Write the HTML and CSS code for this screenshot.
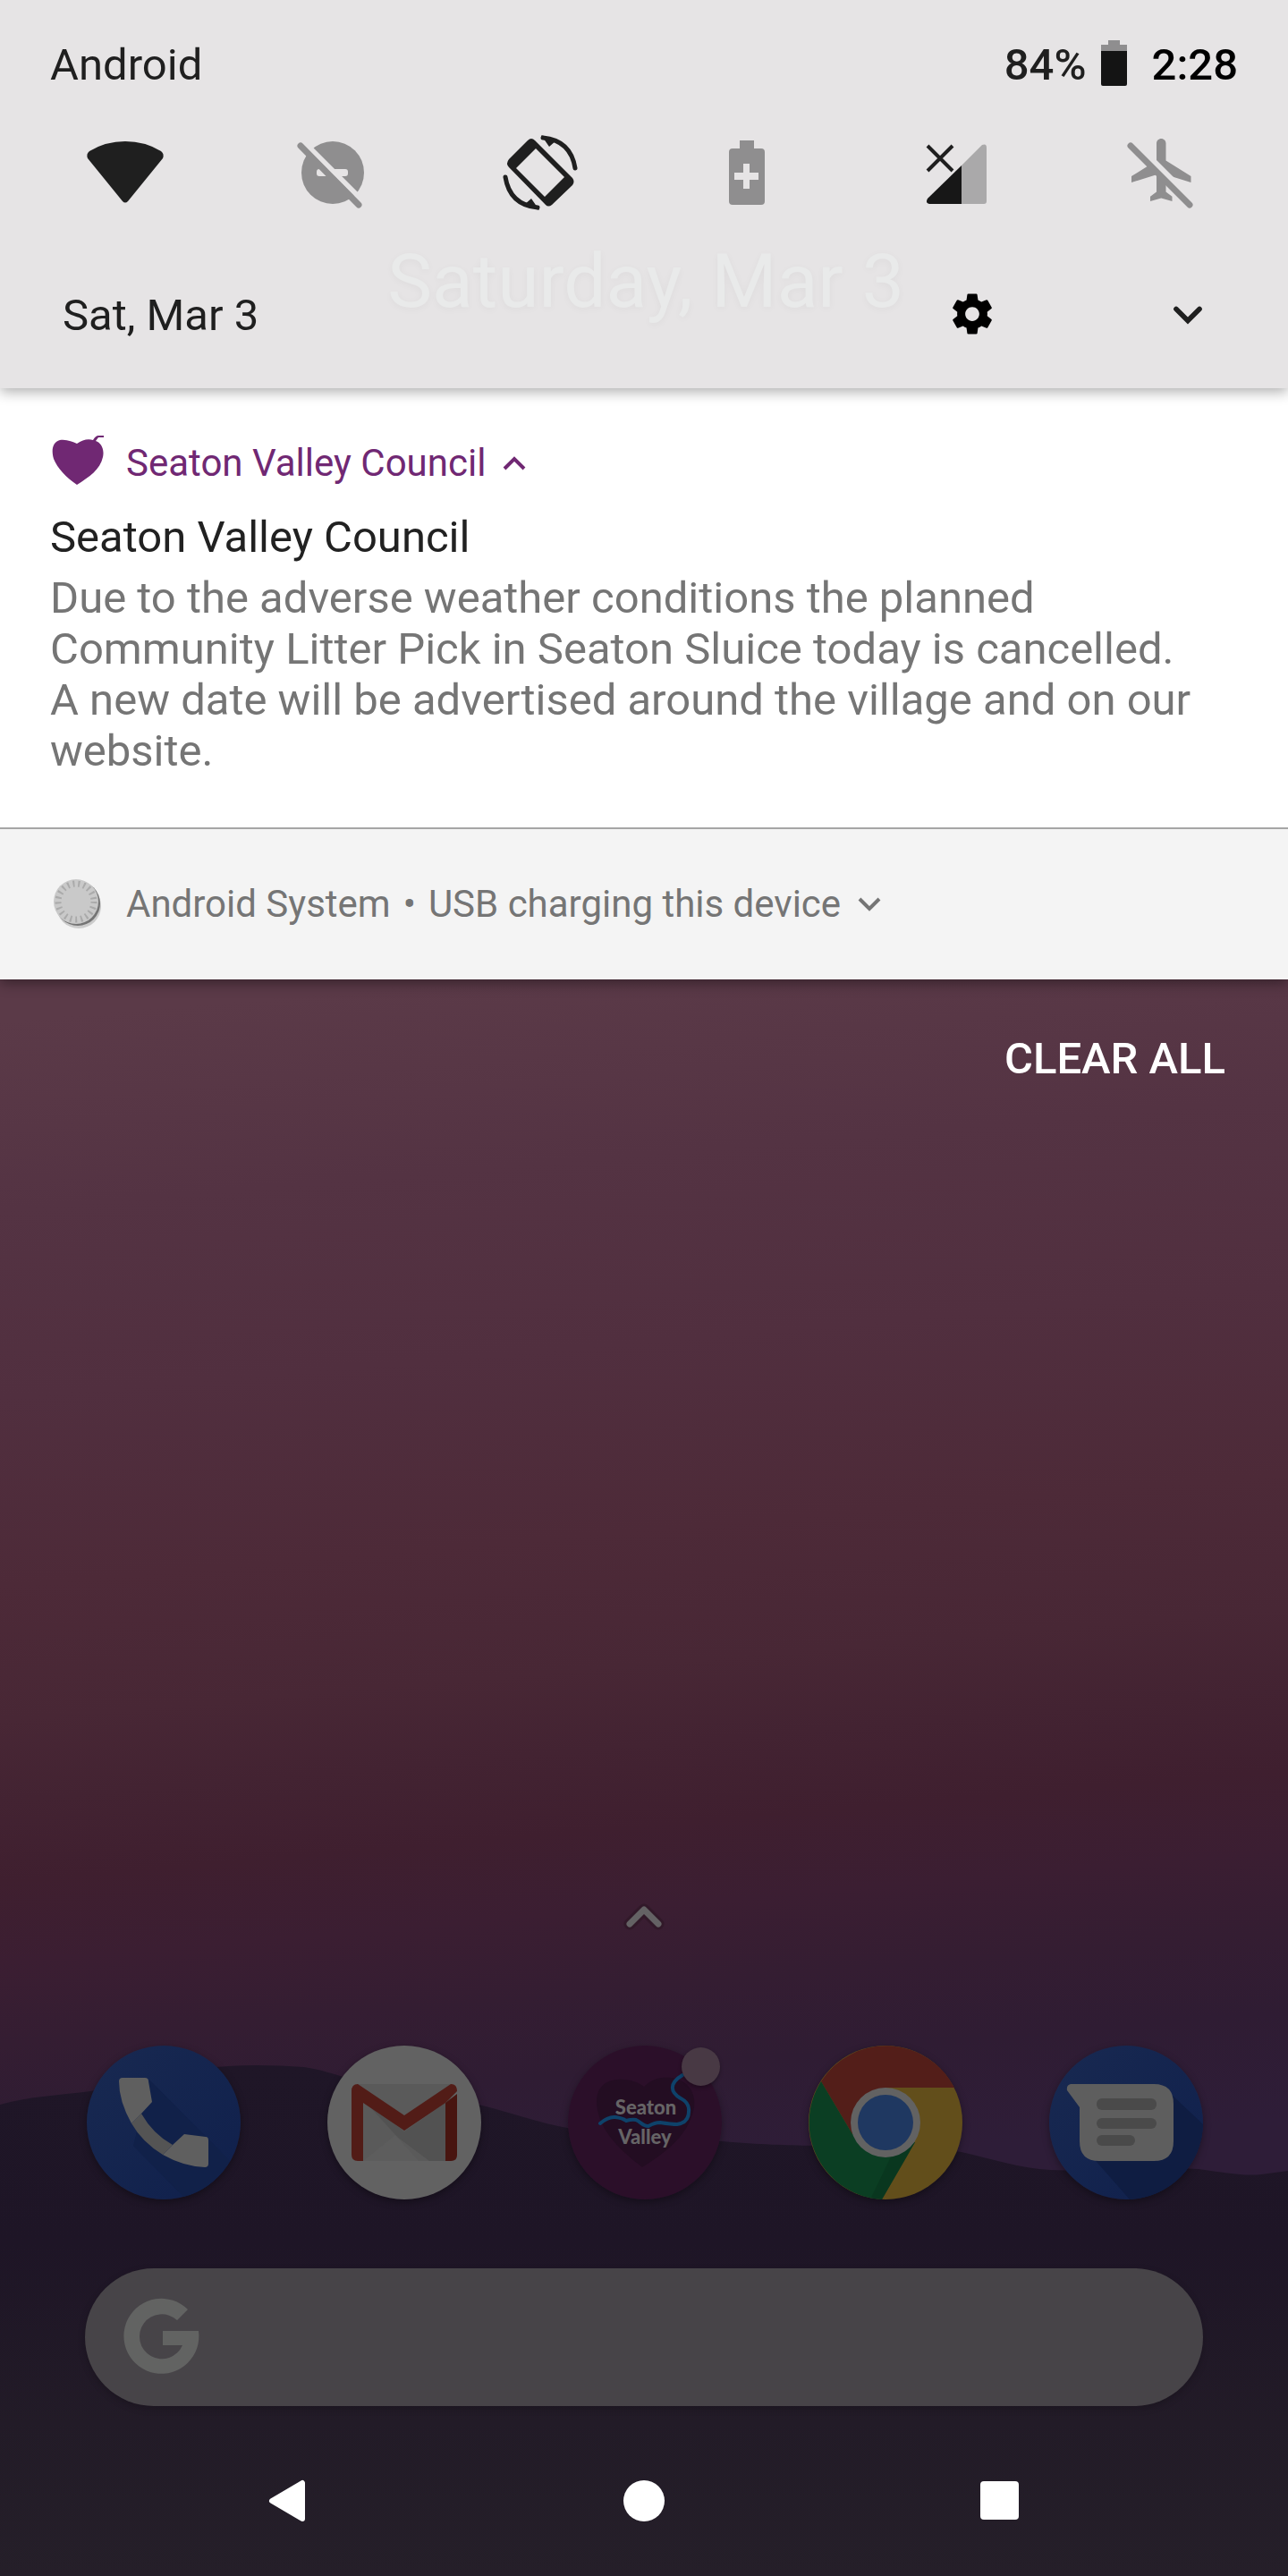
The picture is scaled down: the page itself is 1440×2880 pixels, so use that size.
FILE: index.html
```html
<!DOCTYPE html>
<html lang="en">
<head>
<meta charset="utf-8">
<meta name="viewport" content="width=device-width, initial-scale=1">
<title>Notification shade</title>
<link rel="stylesheet" href="styles.css">
</head>
<body>
<div class="screen">
  <svg class="hills" viewBox="0 0 1440 580" preserveAspectRatio="none" aria-hidden="true">
    <defs>
      <linearGradient id="hill" x1="0" y1="0" x2="0" y2="1">
        <stop offset="0" stop-color="#1f1627"/>
        <stop offset=".35" stop-color="#1e1526"/>
        <stop offset=".7" stop-color="#221b27"/>
        <stop offset="1" stop-color="#251f29"/>
      </linearGradient>
    </defs>
    <path fill="url(#hill)" d="M0 53C30 44 70 42 101 38C150 30 190 14 240 11C275 8 310 9 340 11C360 14 370 18 390 24C450 38 500 44 551 57C590 68 610 75 640 80C690 90 750 92 808 94C850 98 880 98 909 99C970 102 1030 98 1075 106C1110 114 1140 124 1175 126C1230 129 1300 122 1340 125C1370 129 1390 133 1410 131L1440 127V580H0Z"/>
  </svg>

  <header class="shade">
    <p class="ghost-date" aria-hidden="true">Saturday, Mar 3</p>
    <div class="status">
      <span class="carrier">Android</span>
      <span class="percent">84%</span>
      <svg class="battery" viewBox="0 0 29 51" aria-hidden="true">
        <path fill="#8f8e8f" d="M8 0h13v5h8v7H0V5h8z"/>
        <path fill="#141414" d="M0 12h29v37q0 2-2 2H2q-2 0-2-2z"/>
      </svg>
      <time class="clock">2:28</time>
    </div>
    <div class="quick">
      <button class="tile" aria-label="Wi-Fi"><svg viewBox="0 0 84 84"><path fill="#1f1f1f" d="M0 26Q-2 21 2 18Q20 7 42 7T82 18Q86 21 84 26L45 74Q42 77 39 74Z"/></svg></button>
      <button class="tile" aria-label="Do not disturb"><svg viewBox="0 0 84 84"><circle cx="42" cy="42" r="35" fill="#8f8e8f"/><rect x="24" y="38" width="35" height="8" rx="3" fill="#e6e4e5"/><path stroke="#e6e4e5" stroke-width="6" d="M11 9l70 70"/><path stroke="#8f8e8f" stroke-width="7" stroke-linecap="round" d="M6 12l65 66"/></svg></button>
      <button class="tile" aria-label="Auto-rotate"><svg viewBox="0 0 84 84"><path fill="#1f1f1f" fill-rule="evenodd" d="M28 6Q32 2 36 6L78 48Q81 52 78 56L55 78Q51 81 48 78L7 36Q3 32 7 27ZM37 15L15 37L47 69L69 47Z"/><g fill="none" stroke="#1f1f1f" stroke-width="5" stroke-linecap="round"><path d="M45 3Q76 6 81 37"/><path d="M39 81Q8 78 3 47"/></g><path fill="#1f1f1f" d="M43 0l9 13 8-7zM41 84l-9-13-8 7z"/></svg></button>
      <button class="tile" aria-label="Battery saver"><svg viewBox="0 0 84 84"><path fill="#8f8e8f" fill-rule="evenodd" d="M34 6h16v9h8q4 0 4 4v55q0 4-4 4H26q-4 0-4-4V19q0-4 4-4h8zM38 32v10H28v8h10v10h7V50h10v-8H45V32z"/></svg></button>
      <button class="tile" aria-label="Mobile data"><svg viewBox="0 0 84 84"><path fill="#aaa9aa" d="M50 34L73 11q5-2 5 3v60q0 3-3 3H50z"/><path fill="#171717" d="M50 34v43H14q-5-1-2-6z"/><path stroke="#1f1f1f" stroke-width="4" d="M12 12l28 28M40 12L12 40"/></svg></button>
      <button class="tile" aria-label="Airplane mode"><svg viewBox="0 0 84 84"><path fill="#8f8e8f" transform="translate(1 -3) scale(3.5)" d="M21 16v-2l-8-5V3.500c0-.83-.67-1.500-1.500-1.500S10 2.670 10 3.500V9l-8 5v2l8-2.500V19l-2 1.500V22l3.500-1 3.500 1v-1.500L13 19v-5.500l8 2.500z"/><path stroke="#e6e4e5" stroke-width="7" d="M11 8l66 66"/><path stroke="#8f8e8f" stroke-width="7" stroke-linecap="round" d="M7 12l66 66"/></svg></button>
    </div>
    <div class="shade-foot">
      <span class="date">Sat, Mar 3</span>
      <button class="tool" aria-label="Settings"><svg viewBox="0 0 24 24"><path d="M19.430 12.980c.040-.320.070-.640.070-.980s-.030-.660-.070-.980l2.110-1.650c.190-.150.240-.420.120-.640l-2-3.460c-.120-.220-.390-.300-.610-.220l-2.490 1c-.520-.400-1.080-.730-1.690-.980l-.380-2.650C14.460 2.180 14.250 2 14 2h-4c-.250 0-.460.180-.490.420l-.380 2.650c-.610.250-1.170.590-1.690.980l-2.490-1c-.230-.090-.490 0-.610.220l-2 3.460c-.130.220-.070.490.120.640l2.110 1.650c-.040.320-.070.650-.070.980s.030.660.070.980l-2.110 1.650c-.190.150-.240.420-.120.640l2 3.460c.120.220.390.300.610.220l2.490-1c.520.400 1.080.730 1.690.980l.380 2.650c.030.240.240.420.490.420h4c.250 0 .460-.180.490-.420l.380-2.650c.610-.250 1.170-.590 1.690-.980l2.490 1c.230.090.490 0 .610-.220l2-3.460c.120-.220.070-.490-.120-.640zM12 15.500c-1.930 0-3.500-1.570-3.500-3.500s1.570-3.500 3.500-3.500 3.500 1.570 3.500 3.500-1.570 3.500-3.500 3.500z"/></svg></button>
      <button class="tool" aria-label="Expand quick settings"><svg viewBox="0 0 58 58"><path fill="none" stroke="#1f1f1f" stroke-width="6" stroke-linecap="round" d="M15 23l14 14 14-14"/></svg></button>
    </div>
  </header>

  <main class="notifications">
    <article class="note">
      <button class="note-head council">
        <svg class="note-icon" viewBox="0 0 60 62" aria-hidden="true"><path fill="#702873" d="M30 9C36 5 42 3 48 5Q51 0 54 0h6v2h-6l-3 4C57 8 61 15 59 24C56 38 44 46 30 55C18 47 8 36 4 26C1 16 3 7 11 5C19 4 25 7 30 9Z"/></svg>
        <span>Seaton Valley Council</span>
        <svg class="caret" viewBox="0 0 26 18" aria-hidden="true"><path fill="none" stroke="currentColor" stroke-width="4" d="M2 15L13 4l11 11"/></svg>
      </button>
      <h1 class="note-title">Seaton Valley Council</h1>
      <p class="note-text">Due to the adverse weather conditions the planned Community Litter Pick in Seaton Sluice today is cancelled. A new date will be advertised around the village and on our website.</p>
    </article>
    <article class="note-min">
      <button class="note-head">
        <svg class="note-icon" viewBox="0 0 60 62" aria-hidden="true"><circle cx="32" cy="33" r="25" fill="#ccc"/><circle cx="31" cy="30" r="25" fill="#757575"/><circle cx="29" cy="28" r="25" fill="#c9c9c9"/><circle cx="29" cy="28" r="20" fill="none" stroke="#aaa" stroke-width="7" stroke-dasharray="2 4"/></svg>
        <span>Android System</span><span class="bullet">•</span><span>USB charging this device</span>
        <svg class="caret" viewBox="0 0 26 18" aria-hidden="true"><path fill="none" stroke="currentColor" stroke-width="4" d="M2 3l11 11L24 3"/></svg>
      </button>
    </article>
  </main>
  <button class="clear">CLEAR ALL</button>

  <section class="home">
    <svg class="drawer-hint" viewBox="0 0 48 36" aria-hidden="true"><g fill="none" stroke-linecap="round" stroke-linejoin="round"><path stroke="#311929" stroke-width="13" d="M8 26L24 10l16 16"/><path stroke="#646264" stroke-width="7" d="M8 26L24 10l16 16"/></g></svg>
    <nav class="dock" aria-label="Favourite apps">
      <a class="app" href="#phone" aria-label="Phone"><svg viewBox="0 0 172 172">
        <defs><linearGradient id="blue" x1="0" y1="0" x2="1" y2="1"><stop offset="0" stop-color="#182951"/><stop offset="1" stop-color="#10204c"/></linearGradient></defs>
        <circle cx="86" cy="86" r="86" fill="url(#blue)"/><path fill="#112149" d="M70 38L160 129Q140 162 108 169L52 112L61 76Z"/>
        <path fill="#545454" d="M50 87L61 76Q74 99 96 111L85 122Q62 108 50 87Z"/>
        <path fill="#5f5f5f" d="M40 36H65Q69 36 69 40L73 63L61 76L50 87Q36 62 36 40Q36 36 40 36ZM96 111L109 99L133 102Q136 102 136 106V132Q136 136 132 136Q108 135 85 122Z"/></svg></a>
      <a class="app" href="#mail" aria-label="Gmail"><svg viewBox="0 0 172 172">
        <circle cx="86" cy="86" r="86" fill="#626262"/><path fill="#5a5a5a" d="M34 43h104v86H34z"/><path fill="#525252" d="M40 60l38 42 36 27h18V64l-46 32z"/><path fill="#5d5d5d" d="M40 129l36-29 26 29z"/>
        <path fill="#521c17" d="M27 51q0-8 7-8l52 35 52-35q7 0 7 8l-13 13-46 31-46-31v65h-6q-7 0-7-7z"/><path fill="#481510" d="M132 64l13-10v68q0 7-7 7h-6z"/></svg></a>
      <a class="app" href="#seaton" aria-label="Seaton Valley, new notification"><svg viewBox="0 0 172 172">
        <circle cx="86" cy="86" r="86" fill="#2b0f29"/><path fill="#230d22" d="M85 46C95 36 105 35 116 36C136 39 145 56 140 74C132 103 108 120 83 136C60 118 38 98 33 72C29 52 38 39 55 38C69 37 78 41 85 46Z"/>
        <path fill="none" stroke="#0e426a" stroke-width="4" stroke-linecap="round" d="M36 87Q45 79 53 80T65 84Q72 82 76 83C82 86 85 91 90 90Q97 86 103 86Q116 88 122 88Q135 86 135 74C136 66 132 62 126 59C114 52 113 42 128 33"/>
        <text class="logo-text" x="87" y="77">Seaton</text><text class="logo-text" x="86" y="110">Valley</text></svg><span class="dot"></span></a>
      <a class="app" href="#chrome" aria-label="Chrome"><svg viewBox="0 0 172 172">
        <circle cx="86" cy="86" r="86" fill="#624e1b"/><path fill="#531e19" d="M14 40A86 86 0 0 1 163 47H86L49 99Z"/><path fill="#0b3e23" d="M14 40A86 86 0 0 0 82 172L119 108L86 100L49 99Z"/><path fill="#09331d" d="M96 116L119 108 82 172l-12-2z" opacity=".6"/><circle cx="86" cy="86" r="39" fill="#626262"/><circle cx="86" cy="86" r="31" fill="#1f3861"/></svg></a>
      <a class="app" href="#messages" aria-label="Messages"><svg viewBox="0 0 172 172">
        <circle cx="86" cy="86" r="86" fill="url(#blue)"/><path fill="#0f1d42" d="M138 56L172 88A86 86 0 0 1 90 172L46 122Z"/>
        <path fill="#5e5e5e" d="M24 43h93q22 0 22 22v42q0 22-22 22H56q-22 0-22-22V69L20 50q-1-6 4-7z"/><g fill="#4a4a4a"><rect x="53" y="59" width="67" height="13" rx="6"/><rect x="53" y="81" width="67" height="12" rx="6"/><rect x="53" y="100" width="43" height="12" rx="6"/></g></svg></a>
    </nav>
    <form class="search" role="search">
      <button class="search-go" type="button" aria-label="Google Search"><svg viewBox="0 0 84 84"><path fill="#626362" d="M42 35H82A42 42 0 1 1 70 11L58 23A25 25 0 1 0 64 51H42Z"/></svg></button>
      <input class="search-box" type="text" aria-label="Search">
    </form>
  </section>

  <nav class="navbar" aria-label="System navigation">
    <button class="nav-key" aria-label="Back"><svg viewBox="0 0 84 84"><path fill="#fff" stroke="#fff" stroke-width="6" stroke-linejoin="round" d="M24 42L58 22v40z"/></svg></button>
    <button class="nav-key" aria-label="Home"><svg viewBox="0 0 84 84"><circle cx="42" cy="42" r="23" fill="#fff"/></svg></button>
    <button class="nav-key" aria-label="Recent apps"><svg viewBox="0 0 84 84"><rect x="20" y="20" width="43" height="43" rx="4" fill="#fff"/></svg></button>
  </nav>
</div>
</body>
</html>
```
FILE: styles.css
```css
* {
  box-sizing: border-box;
}

body {
  margin: 0;
  font-family: Roboto, "Liberation Sans", sans-serif;
  font-size: 49px;
  line-height: 58px;
  color: #1f1f1f;
}

button {
  padding: 0;
  border: 0;
  background: none;
  font: inherit;
  color: inherit;
  cursor: pointer;
}

svg {
  display: block;
  overflow: visible;
}

p,
h1 {
  margin: 0;
}

.screen {
  position: relative;
  isolation: isolate;
  display: flex;
  flex-direction: column;
  min-height: 100vh;
  background: linear-gradient(175deg, #5b3a48 38%, #543343 45%, #512f3f 52%, #4d2a38 59%, #482735 64%, #432332 67%, #3f1f2f 70%, #3b1e32 73%, #341d32 76%, #2f1c33 79%, #2e1d38 83%);
}

.hills {
  position: absolute;
  z-index: -1;
  bottom: 0;
  left: 0;
  width: 100%;
  height: 580px;
}

/* Quick settings panel */

.shade {
  position: relative;
  z-index: 1;
  display: flex;
  flex-direction: column;
  padding: 44px 0 52px;
  background: #e6e4e5;
  box-shadow: 0 4px 14px rgba(0, 0, 0, 0.32);
}

.ghost-date {
  position: absolute;
  top: 266px;
  left: 2px;
  width: 100%;
  font-size: 84px;
  line-height: 98px;
  text-align: center;
  color: #e9eaea;
  text-shadow: 0 2px 8px rgba(0, 0, 0, 0.04);
}

.status,
.quick,
.shade-foot {
  position: relative;
  display: flex;
  align-items: center;
}

.status {
  padding: 0 56px;
}

.carrier,
.date {
  flex: 1;
}

.percent,
.clock {
  font-weight: 500;
}

.battery {
  width: 29px;
  height: 51px;
  margin: 0 28px 6px 16px;
}

.clock {
  color: #000;
}

.quick {
  justify-content: space-between;
  margin-top: 49px;
  padding: 0 99px 0 98px;
}

.tile,
.tile svg {
  width: 84px;
  height: 84px;
}

.shade-foot {
  gap: 183px;
  margin-top: 89px;
  padding: 0 83px 0 70px;
}

.tool,
.tool svg {
  width: 58px;
  height: 54px;
}

.tool {
  margin-bottom: 4px;
}

/* Notifications */

.notifications {
  box-shadow: 0 4px 14px rgba(0, 0, 0, 0.4);
}

.note {
  padding: 53px 56px 57px;
  border-bottom: 2px solid #a6a6a6;
  background: #fff;
}

.note-head {
  display: flex;
  align-items: center;
  font-size: 42px;
  line-height: 50px;
  color: #757575;
}

.council {
  color: #702873;
}

.note-icon {
  width: 60px;
  height: 62px;
  margin-right: 25px;
}

.bullet {
  margin: 0 14px;
}

.caret {
  width: 26px;
  height: 18px;
  margin-left: 19px;
}

.note-title {
  margin-top: 23px;
  font-size: 49px;
  font-weight: 400;
  line-height: 58px;
  color: #212121;
}

.note-text {
  margin-top: 10px;
  padding-right: 42px;
  line-height: 57px;
  color: #757575;
}

.note-min {
  padding: 53px 56px;
  background: #f4f4f4;
}

.clear {
  align-self: flex-end;
  margin: 60px 70px 0 0;
  font-weight: 500;
  color: #fff;
}

/* Home screen behind the shade */

.home {
  display: flex;
  flex-direction: column;
  margin-top: auto;
  padding: 0 95px;
}

.drawer-hint {
  align-self: center;
  width: 48px;
  height: 36px;
}

.dock {
  display: flex;
  justify-content: space-between;
  margin-top: 126px;
  padding-left: 2px;
}

.app {
  position: relative;
  width: 172px;
  height: 172px;
  border-radius: 50%;
  box-shadow: 0 3px 8px rgba(0, 0, 0, 0.35);
}

.logo-text {
  font-family: Lato, sans-serif;
  font-size: 22px;
  font-weight: 900;
  text-anchor: middle;
  fill: #666466;
}

.dot {
  position: absolute;
  top: 2px;
  right: 2px;
  width: 43px;
  height: 43px;
  border-radius: 50%;
  background: #483944;
  box-shadow: 0 2px 4px rgba(0, 0, 0, 0.3);
}

.search {
  display: flex;
  align-items: center;
  height: 154px;
  margin: 77px 0 22px;
  padding: 0 45px;
  border-radius: 77px;
  background: #474448;
  box-shadow: 0 3px 8px rgba(0, 0, 0, 0.2);
}

.search-go,
.search-go svg {
  width: 84px;
  height: 84px;
}

.search-box {
  flex: 1;
  min-width: 0;
  height: 84px;
  padding: 0 24px;
  border: 0;
  outline: 0;
  background: transparent;
  font: inherit;
  color: #e6e4e5;
}

.navbar {
  display: flex;
  justify-content: center;
  gap: 314px;
  padding: 42px 0;
}

.nav-key,
.nav-key svg {
  width: 84px;
  height: 84px;
}
```
